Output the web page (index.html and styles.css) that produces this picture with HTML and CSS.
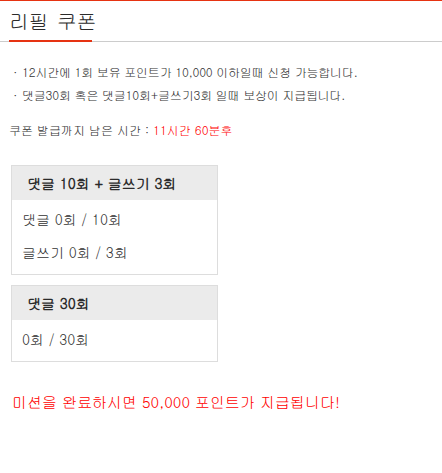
FILE: index.html
```html
<!DOCTYPE html>
<html lang="ko">
<head>
  <meta charset="UTF-8">
  <meta name="viewport" content="width=device-width, initial-scale=1.0">
  <title>리필 쿠폰</title>
  <link rel="stylesheet" href="styles.css">
</head>
<body>
  <div class="page">
    <!-- Title -->
    <div class="title-bar">
      <h1 class="title">리필 쿠폰</h1>
    </div>

    <!-- Notice -->
    <ul class="notice">
      <li>12시간에 1회 보유 포인트가 10,000 이하일때 신청 가능합니다.</li>
      <li>댓글30회 혹은 댓글10회+글쓰기3회 일때 보상이 지급됩니다.</li>
    </ul>

    <p class="timer">쿠폰 발급까지 남은 시간 : <span class="time-left">11시간 60분후</span></p>

    <!-- Missions -->
    <div class="mission-box">
      <div class="mission-head">댓글 10회 + 글쓰기 3회</div>
      <div class="mission-body">
        <p class="mission-row">댓글 0회 / 10회</p>
        <p class="mission-row">글쓰기 0회 / 3회</p>
      </div>
    </div>

    <div class="mission-box">
      <div class="mission-head">댓글 30회</div>
      <div class="mission-body">
        <p class="mission-row">0회 / 30회</p>
      </div>
    </div>

    <p class="reward">미션을 완료하시면 50,000 포인트가 지급됩니다!</p>
  </div>
</body>
</html>
```

FILE: styles.css
```css
body {
  margin: 0;
  padding: 0;
  background-color: #ffffff;
  font-family: Gulim, "Noto Sans CJK KR", sans-serif;
  color: #333333;
}

.page {
  border-top: 1px solid #e63312; /* thin red line on top */
}

/* Title */
.title-bar {
  display: flex;
  align-items: flex-end;
  height: 40px;
  border-bottom: 1px solid #cccccc;
}

.title {
  margin: 0 0 -1px 9px;
  padding: 0 0 6px 0;
  width: 83px;
  white-space: nowrap;
  font-size: 20px;
  font-weight: normal;
  line-height: 26px;
  letter-spacing: -0.3px;
  word-spacing: 2px;
  color: #2b2b2b;
  border-bottom: 2px solid #e63312;
}

/* Notice */
.notice {
  list-style: none;
  margin: 18px 0 0 0;
  padding: 0 0 0 13px;
  font-size: 12px;
  line-height: 23px;
  letter-spacing: -0.2px;
}

.notice li::before {
  content: "·";
  display: inline-block;
  width: 9px;
}

.timer {
  margin: 12px 0 0 9px;
  font-size: 12px;
  line-height: 23px;
}

.time-left {
  color: #ff0000;
}

/* Mission boxes */
.mission-box {
  width: 205px;
  margin: 0 0 10px 11px;
  border: 1px solid #dddddd;
}

.timer + .mission-box {
  margin-top: 24px;
}

.mission-head {
  height: 34px;
  padding-left: 15px;
  background-color: #ebebeb;
  font-size: 14px;
  font-weight: bold;
  line-height: 34px;
  color: #2b2b2b;
}

.mission-body {
  padding: 3px 10px 5px;
}

.mission-row {
  margin: 0;
  font-size: 14px;
  line-height: 33px;
}

.reward {
  margin: 29px 0 0 12px;
  font-size: 15px;
  line-height: 22px;
  color: #ff0000;
}
```
